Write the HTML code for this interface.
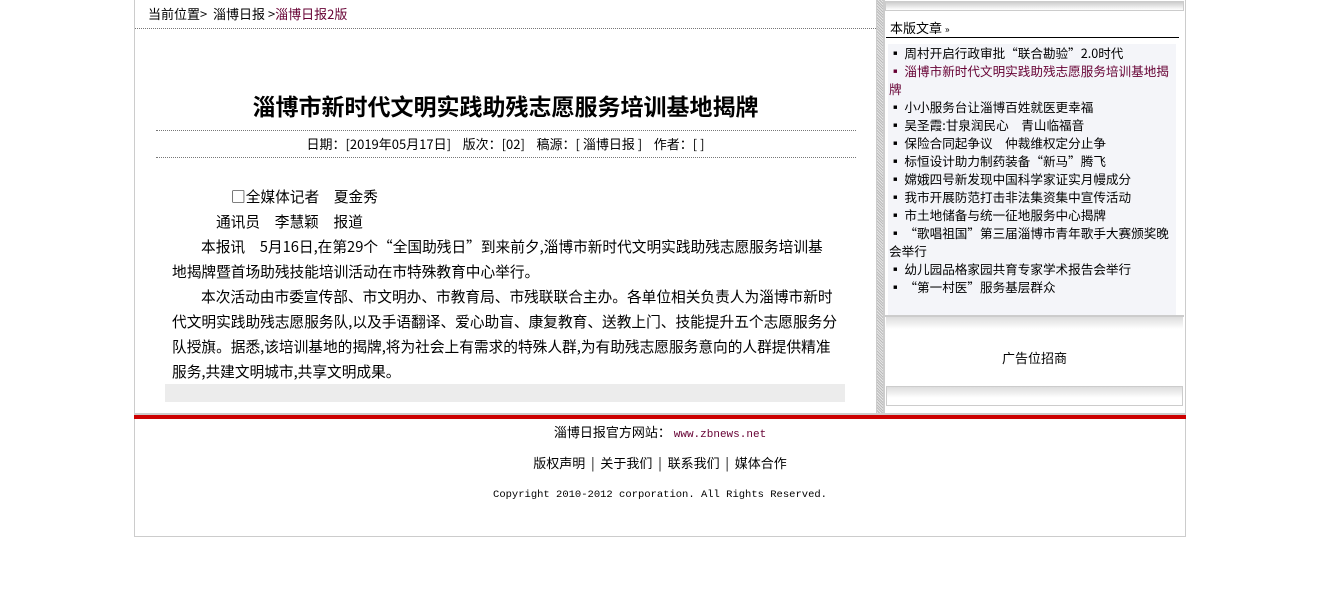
<!DOCTYPE html>
<html><head><meta charset="utf-8"><style>
*{margin:0;padding:0;box-sizing:border-box}
body{width:1320px;height:600px;background:#fff;font-family:"Noto Sans CJK SC","Liberation Sans",sans-serif;color:#000;position:relative;overflow:hidden}
.a{position:absolute;white-space:nowrap}
</style></head><body>
<div class="a" style="left:134px;top:0;width:1052px;height:537px;border:1px solid #ccc;border-top:none"></div>
<div class="a" style="left:148px;top:5px;font-size:13px;line-height:18px">当前位置&gt; &nbsp;淄博日报 &gt;<span style="color:#603">淄博日报2版</span></div>
<div class="a" style="left:135px;top:28px;width:741px;border-top:1px dotted #777"></div>
<div class="a" style="left:876px;top:0;width:8px;height:414px;background:repeating-linear-gradient(45deg,#bbb 0 1px,#e6e6e6 1px 2px);border-left:1px solid #ccc;border-right:1px solid #ccc"></div>
<div class="a" style="left:135px;top:89px;width:741px;text-align:center;font-size:23px;font-weight:bold;line-height:32px">淄博市新时代文明实践助残志愿服务培训基地揭牌</div>
<div class="a" style="left:156px;top:130px;width:700px;border-top:1px dotted #777"></div>
<div class="a" style="left:135px;top:135px;width:741px;text-align:center;font-size:13px;line-height:18px">日期：[2019年05月17日]&nbsp;&nbsp;&nbsp;&nbsp;版次：[02]&nbsp;&nbsp;&nbsp;&nbsp;稿源：[ 淄博日报 ]&nbsp;&nbsp;&nbsp;&nbsp;作者：[ ]</div>
<div class="a" style="left:156px;top:157px;width:700px;border-top:1px dotted #777"></div>
<div class="a" style="left:172px;top:184px;font-size:14.7px;line-height:25px">
<div style="padding-left:59px">□全媒体记者　夏金秀</div>
<div style="padding-left:44px">通讯员　李慧颖　报道</div>
<div style="padding-left:29px">本报讯　5月16日,在第29个“全国助残日”到来前夕,淄博市新时代文明实践助残志愿服务培训基</div>
<div>地揭牌暨首场助残技能培训活动在市特殊教育中心举行。</div>
<div style="padding-left:29px">本次活动由市委宣传部、市文明办、市教育局、市残联联合主办。各单位相关负责人为淄博市新时</div>
<div>代文明实践助残志愿服务队,以及手语翻译、爱心助盲、康复教育、送教上门、技能提升五个志愿服务分</div>
<div>队授旗。据悉,该培训基地的揭牌,将为社会上有需求的特殊人群,为有助残志愿服务意向的人群提供精准</div>
<div>服务,共建文明城市,共享文明成果。</div>
</div>
<div class="a" style="left:165px;top:384px;width:680px;height:18px;background:#ececec"></div>
<div class="a" style="left:884px;top:0;width:302px;height:414px;border-left:1px solid #ccc"></div>
<div class="a" style="left:885px;top:1px;width:299px;height:10px;background:linear-gradient(#ccc,#fff);border:1px solid #ccc"></div>
<div class="a" style="left:890px;top:19px;font-size:13px;line-height:18px">本版文章 <span style="font-size:10px">»</span></div>
<div class="a" style="left:886px;top:37px;width:293px;border-top:1px solid #000"></div>
<div class="a" style="left:888px;top:44px;width:288px;height:272px;background:#f4f5f9"></div>
<div class="a" style="left:889px;top:44px;width:283px;font-size:12.6px;line-height:18px;white-space:normal">
<div>▪ 周村开启行政审批“联合勘验”2.0时代</div>
<div style="color:#603">▪ 淄博市新时代文明实践助残志愿服务培训基地揭牌</div>
<div>▪ 小小服务台让淄博百姓就医更幸福</div>
<div>▪ 吴圣霞:甘泉润民心　青山临福音</div>
<div>▪ 保险合同起争议　仲裁维权定分止争</div>
<div>▪ 标恒设计助力制药装备“新马”腾飞</div>
<div>▪ 嫦娥四号新发现中国科学家证实月幔成分</div>
<div>▪ 我市开展防范打击非法集资集中宣传活动</div>
<div>▪ 市土地储备与统一征地服务中心揭牌</div>
<div>▪ “歌唱祖国”第三届淄博市青年歌手大赛颁奖晚会举行</div>
<div>▪ 幼儿园品格家园共育专家学术报告会举行</div>
<div>▪ “第一村医”服务基层群众</div>
</div>
<div class="a" style="left:885px;top:315px;width:299px;height:2px;background:#ccc"></div>
<div class="a" style="left:886px;top:317px;width:297px;height:12px;background:linear-gradient(#ddd,#fff)"></div>
<div class="a" style="left:885px;top:349px;width:299px;text-align:center;font-size:13px;line-height:18px">广告位招商</div>
<div class="a" style="left:886px;top:386px;width:297px;height:20px;border:1px solid #ccc;background:linear-gradient(#ddd,#fff 60%)"></div>
<div class="a" style="left:134px;top:413px;width:1052px;height:2px;background:#ccc"></div>
<div class="a" style="left:134px;top:415px;width:1052px;height:4px;background:#c00"></div>
<div class="a" style="left:134px;top:423px;width:1052px;text-align:center;font-size:13px;line-height:18px">淄博日报官方网站： <span style="font-family:'Liberation Mono',monospace;font-size:11px;color:#603">www.zbnews.net</span></div>
<div class="a" style="left:134px;top:454px;width:1052px;text-align:center;font-size:13px;line-height:18px">版权声明 &nbsp;| &nbsp;关于我们 &nbsp;| &nbsp;联系我们 &nbsp;| &nbsp;媒体合作</div>
<div class="a" style="left:134px;top:488px;width:1052px;text-align:center;font-size:10.5px;line-height:14px;font-family:'Liberation Mono',monospace">Copyright 2010-2012 corporation. All Rights Reserved.</div>
</body></html>
